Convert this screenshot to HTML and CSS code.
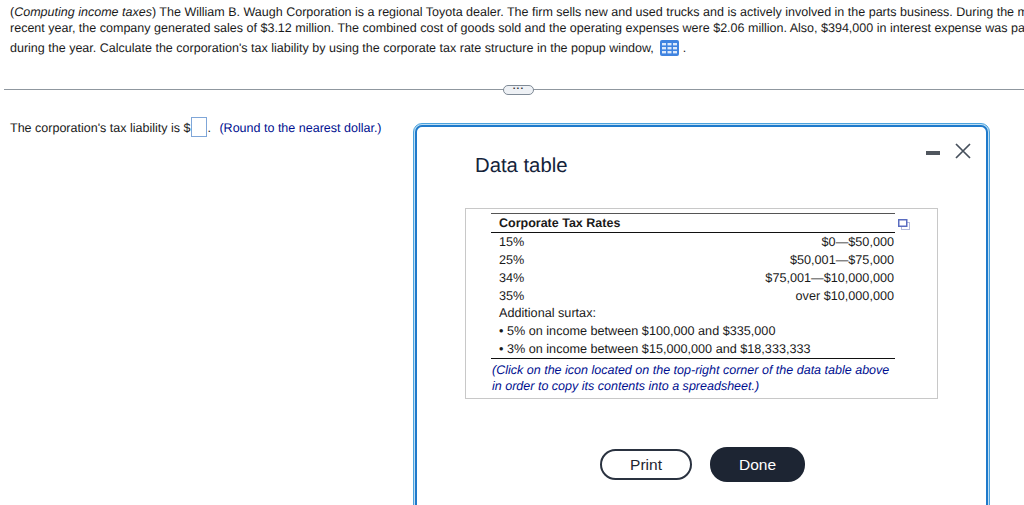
FILE: index.html
```html
<!DOCTYPE html>
<html lang="en">
<head>
    <meta charset="UTF-8">
    <meta name="viewport" content="width=device-width, initial-scale=1.0">
    <title>Computing income taxes</title>
    <link rel="stylesheet" href="styles.css">
</head>
<body>
    <!-- Question -->
    <div class="question">
        <p class="line">(<i>Computing income taxes</i>) The William B. Waugh Corporation is a regional Toyota dealer. The firm sells new and used trucks and is actively involved in the parts business. During the most</p>
        <p class="line">recent year, the company generated sales of $3.12 million. The combined cost of goods sold and the operating expenses were $2.06 million. Also, $394,000 in interest expense was paid</p>
        <p class="line line-last">during the year. Calculate the corporation's tax liability by using the corporate tax rate structure in the popup window,
            <svg class="grid-icon" width="19" height="16" viewBox="0 0 19 16">
                <rect width="19" height="16" rx="2" fill="#3f83e0"/>
                <g fill="#dce9fb">
                    <rect x="2" y="3" width="4" height="2.4"/><rect x="7.5" y="3" width="4" height="2.4"/><rect x="13" y="3" width="4" height="2.4"/>
                    <rect x="2" y="7" width="4" height="2.4"/><rect x="7.5" y="7" width="4" height="2.4"/><rect x="13" y="7" width="4" height="2.4"/>
                    <rect x="2" y="11" width="4" height="2.4"/><rect x="7.5" y="11" width="4" height="2.4"/><rect x="13" y="11" width="4" height="2.4"/>
                </g>
            </svg> .
        </p>
    </div>

    <div class="divider">
        <span class="divider-handle">...</span>
    </div>

    <div class="answer">
        The corporation's tax liability is $<span class="answer-box"></span>. <span class="answer-hint">(Round to the nearest dollar.)</span>
    </div>

    <!-- Popup -->
    <div class="popup">
        <div class="popup-inner">
            <div class="popup-controls">
                <span class="minimize"></span>
                <svg class="close" width="16" height="16" viewBox="0 0 16 16">
                    <path d="M1 1 L15 15 M15 1 L1 15" stroke="#46505c" stroke-width="1.7" fill="none"/>
                </svg>
            </div>
            <h2 class="popup-title">Data table</h2>

            <div class="data-box">
                <div class="data-table">
                    <div class="data-head">Corporate Tax Rates</div>
                    <div class="data-rows">
                        <div class="row"><span>15%</span><span>$0—$50,000</span></div>
                        <div class="row"><span>25%</span><span>$50,001—$75,000</span></div>
                        <div class="row"><span>34%</span><span>$75,001—$10,000,000</span></div>
                        <div class="row"><span>35%</span><span>over $10,000,000</span></div>
                        <div class="row"><span>Additional surtax:</span></div>
                        <div class="row"><span>• 5% on income between $100,000 and $335,000</span></div>
                        <div class="row"><span>• 3% on income between $15,000,000 and $18,333,333</span></div>
                    </div>
                </div>
                <svg class="copy-icon" width="12" height="11" viewBox="0 0 12 11">
                    <rect x="3.5" y="3.5" width="8" height="7" fill="#fff" stroke="#b4bbdc"/>
                    <rect x="0.75" y="0.75" width="8" height="6.5" fill="#fff" stroke="#5a6cc0" stroke-width="1.5"/>
                </svg>
                <p class="data-note">(Click on the icon located on the top-right corner of the data table above in order to copy its contents into a spreadsheet.)</p>
            </div>

            <div class="popup-buttons">
                <button class="btn btn-print">Print</button>
                <button class="btn btn-done">Done</button>
            </div>
        </div>
    </div>
</body>
</html>
```

FILE: styles.css
```css
html, body {
    height: 505px;
    overflow: hidden;
}
body {
    font-family: "Liberation Sans", Arial, sans-serif;
    font-size: 12.53px;
    margin: 0;
    padding: 0;
    color: #1a1a1a;
    background: #fff;
    position: relative;
    text-rendering: geometricPrecision;
}
.question {
    padding: 5px 0 0 10px;
    white-space: nowrap;
    overflow: hidden;
}
.line {
    margin: 0;
    height: 15.5px;
    line-height: 15.5px;
}
.line-last {
    margin-top: 2px;
    height: 20px;
    line-height: 20px;
}
.grid-icon {
    vertical-align: -4px;
    margin-left: 3px;
}
.divider {
    margin: 31px 0 0 4px;
    height: 1px;
    background: #8f979f;
    position: relative;
}
.divider-handle {
    position: absolute;
    left: 499px;
    top: -4px;
    width: 29px;
    height: 8px;
    border: 1px solid #7f8a96;
    border-radius: 5px;
    background: #eef1f5;
    font-size: 10px;
    font-weight: bold;
    line-height: 2px;
    text-align: center;
    letter-spacing: 1px;
    color: #333;
}
.answer {
    margin: 27px 0 0 10px;
    line-height: 22px;
    height: 22px;
    white-space: nowrap;
}
.answer-box {
    display: inline-block;
    width: 14px;
    height: 18px;
    margin-left: 1px;
    border: 1px solid #7fa6d8;
    vertical-align: -5px;
}
.answer-hint {
    color: #000f8f;
    margin-left: 5px;
}
.popup {
    position: absolute;
    left: 413px;
    top: 123px;
    width: 577px;
    height: 420px;
    box-sizing: border-box;
    border: 1px solid #4ba3de;
    border-radius: 9px;
    padding: 1px;
    background: #bfdff3;
}
.popup-inner {
    height: 100%;
    box-sizing: border-box;
    border: 2px solid #1f7acb;
    border-radius: 7px;
    padding: 15px 0 0 58px;
    position: relative;
    background: #fff;
}
.popup-controls {
    position: absolute;
    top: 16px;
    right: 15px;
    display: flex;
    align-items: center;
    gap: 15px;
}
.minimize {
    width: 14px;
    height: 4px;
    margin-top: 3px;
    background: #50565e;
}
.popup-title {
    margin: 12px 0 0;
    font-size: 20.3px;
    font-weight: normal;
    line-height: 24px;
    color: #14233a;
}
.data-box {
    margin: 30px 0 0 -10px;
    width: 473px;
    height: 191px;
    box-sizing: border-box;
    border: 1px solid #c8c8c8;
    padding: 4px 0 0 25px;
    position: relative;
}
.data-table {
    width: 404px;
    border-top: 1px solid #555;
    border-bottom: 1px solid #111;
}
.data-head {
    padding-left: 8px;
    height: 18px;
    line-height: 19px;
    font-weight: bold;
    font-size: 12.5px;
    border-bottom: 1px solid #111;
}
.data-rows {
    padding: 0 1px 0 8px;
    font-size: 12.65px;
}
.row {
    display: flex;
    justify-content: space-between;
    height: 17.85px;
    line-height: 18px;
}
.copy-icon {
    position: absolute;
    left: 432px;
    top: 10px;
}
.data-note {
    margin: 3px 0 0 1px;
    width: 402px;
    font-style: italic;
    line-height: 16px;
    color: #000f8f;
}
.popup-buttons {
    display: flex;
    align-items: center;
    gap: 18px;
    margin: 48px 0 0 125px;
}
.btn {
    font-family: "Liberation Sans", Arial, sans-serif;
    font-size: 15.5px;
    border-radius: 17px;
    padding: 0;
    cursor: pointer;
}
.btn-print {
    width: 92px;
    height: 31px;
    background: #fff;
    color: #1e2530;
    border: 2px solid #2a3240;
}
.btn-done {
    width: 95px;
    height: 35px;
    background: #1d2533;
    color: #fff;
    border: none;
}
```
